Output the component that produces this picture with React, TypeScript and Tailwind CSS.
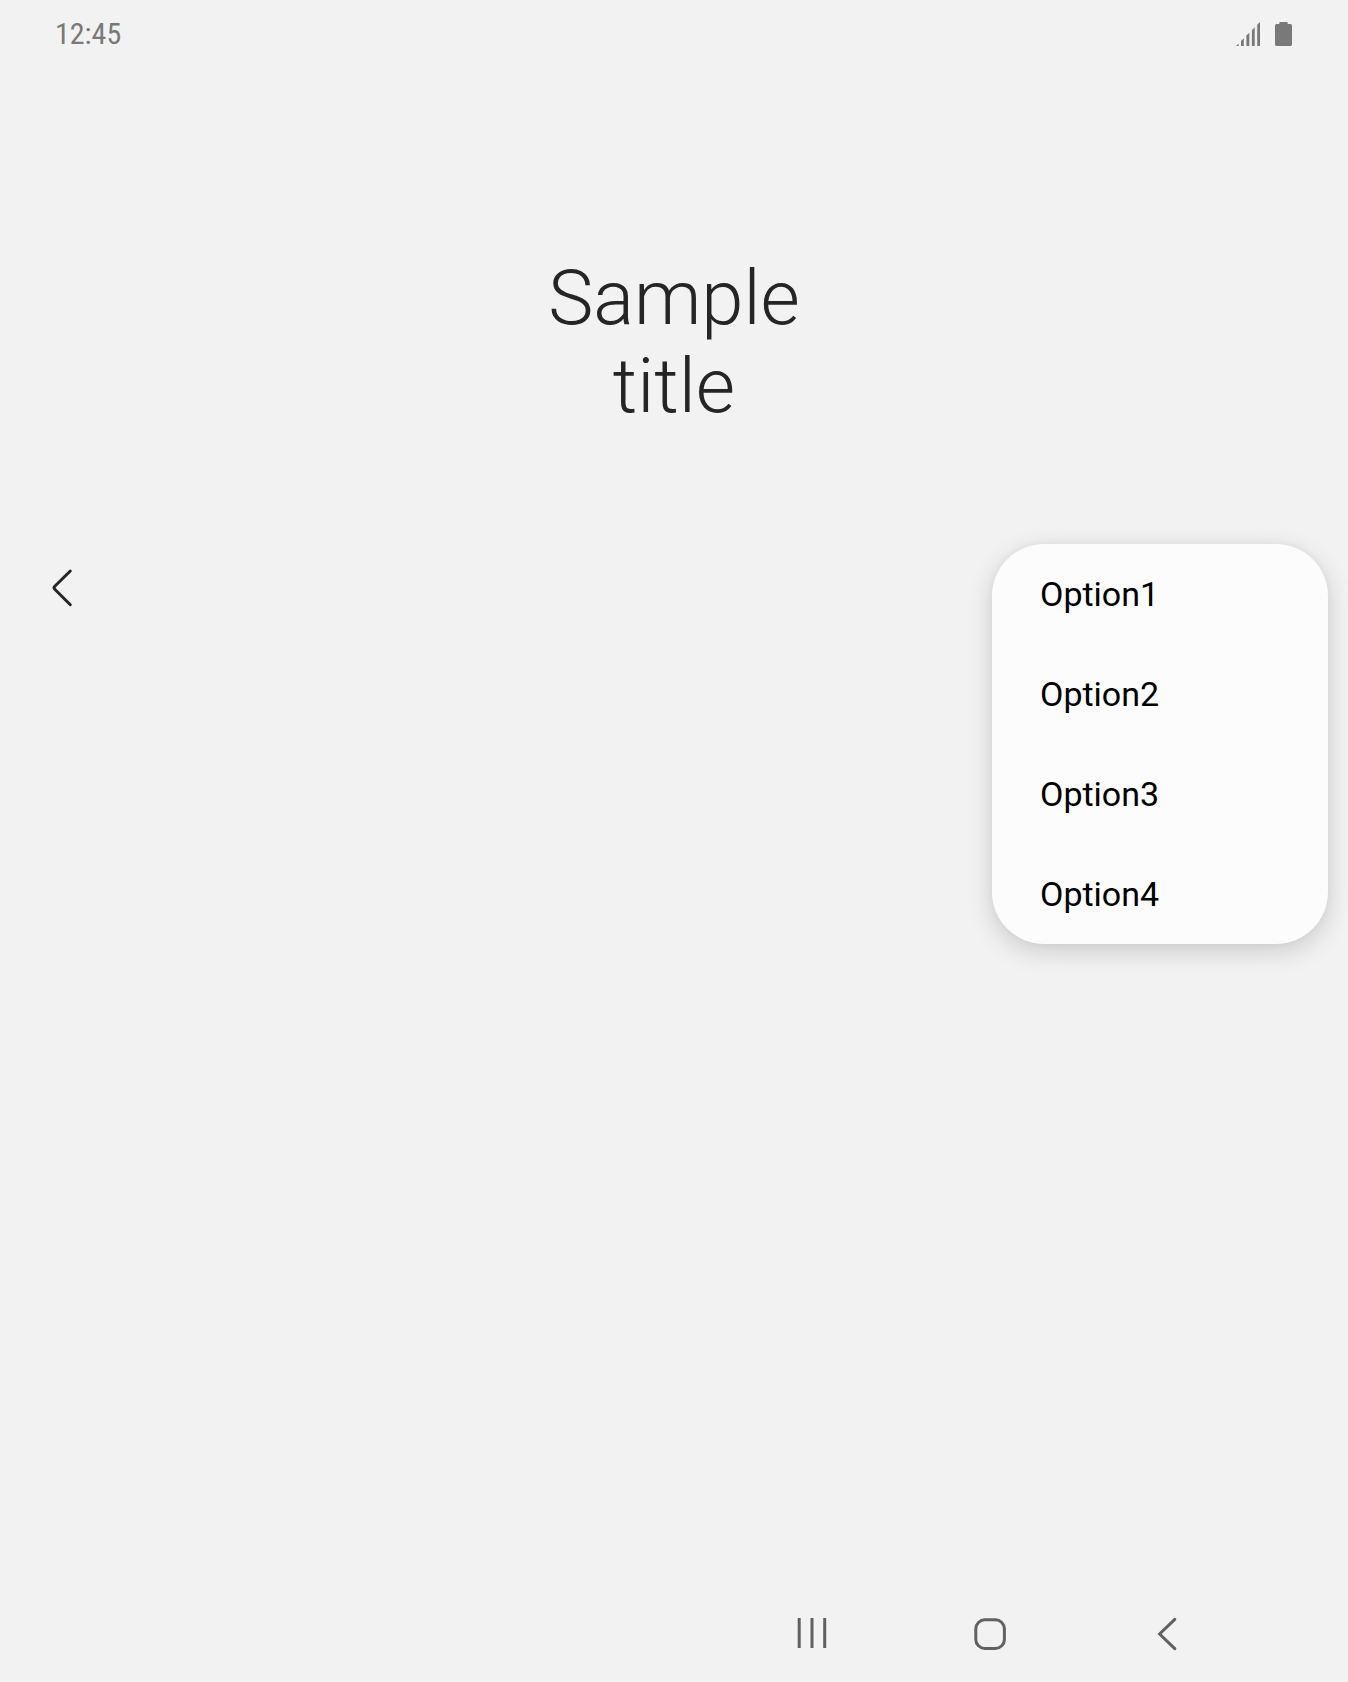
const options = ["Option1", "Option2", "Option3", "Option4"];

function StatusBar() {
  return (
    <header className="flex h-[68px] items-start justify-between pl-[55px] pr-[56px] text-[#797979]">
      <span className="mt-[16px] font-['Roboto_Condensed','Roboto',sans-serif] text-[30px] leading-[36px]">12:45</span>
      <div className="mt-[22px] flex gap-[15px]">
        <svg width="24" height="24" viewBox="0 0 24 24" fill="currentColor" aria-label="Signal">
          <path d="M0 24L2.6 21.6V24ZM5 24V19L7.8 16.2V24ZM10.4 24V13.6L13.3 10.7V24ZM15.9 24V8.2L18.7 5.3V24ZM21.2 24V2.8L24 0V24Z" />
        </svg>
        <svg width="17" height="24" viewBox="0 0 17 24" fill="currentColor" aria-label="Battery">
          <path d="M5.5 0h6c.8 0 1.2.5 1.2 1.2V2h2.6c1 0 1.7.7 1.7 1.7v18.5c0 1-.7 1.8-1.7 1.8H1.8C.8 24 0 23.2 0 22.2V3.7C0 2.7.8 2 1.8 2h2.5v-.8C4.3.5 4.7 0 5.5 0Z" />
        </svg>
      </div>
    </header>
  );
}

function OptionsMenu() {
  return (
    <ul className="mr-[20px] w-[336px] rounded-[52px] bg-[#fcfcfc] shadow-[0_7px_26px_rgba(0,0,0,0.16),0_0_8px_rgba(0,0,0,0.04)]">
      {options.map((label) => (
        <li key={label} className="flex h-[100px] items-center pl-[48px] text-[34px] leading-[40px] text-black">
          {label}
        </li>
      ))}
    </ul>
  );
}

function NavigationBar() {
  return (
    <nav className="mt-auto flex h-[82px] items-start text-[#616161]">
      <button className="ml-[782px] size-[60px]" aria-label="Recents">
        <svg width="60" height="60" viewBox="0 0 60 60" fill="none" stroke="currentColor" strokeWidth="3">
          <path d="M17.2 18V48M30 18V48M42.7 18V48" />
        </svg>
      </button>
      <button className="ml-[118px] size-[60px]" aria-label="Home">
        <svg width="60" height="60" viewBox="0 0 60 60" fill="none" stroke="currentColor" strokeWidth="3">
          <rect x="15.8" y="19.8" width="28.6" height="28.6" rx="9" />
        </svg>
      </button>
      <button className="ml-[120px] size-[60px]" aria-label="Back">
        <svg width="60" height="60" viewBox="0 0 60 60" fill="none" stroke="currentColor" strokeWidth="3" strokeLinecap="round">
          <path d="M34.8 19.3L19.6 34L34.8 48.7" />
        </svg>
      </button>
    </nav>
  );
}

export default function App() {
  return (
    <main className="flex h-[1682px] w-[1348px] flex-col overflow-hidden bg-[#f2f2f2] font-['Roboto',sans-serif]">
      <StatusBar />
      <h1 className="mt-[186px] text-center text-[76px] font-light leading-[88px] text-[#252525]">
        Sample
        <br />
        title
      </h1>
      <section className="mt-[114px] flex items-start justify-between">
        <button className="ml-[30px] mt-[6px] size-[70px]" aria-label="Navigate up">
          <svg width="70" height="70" viewBox="0 0 70 70" fill="none" stroke="#252525" strokeWidth="3" strokeLinecap="round" strokeLinejoin="round">
            <path d="M40.3 21L24.8 36.3Q23.3 37.8 24.8 39.3L40.3 54.7" />
          </svg>
        </button>
        <OptionsMenu />
      </section>
      <NavigationBar />
    </main>
  );
}
